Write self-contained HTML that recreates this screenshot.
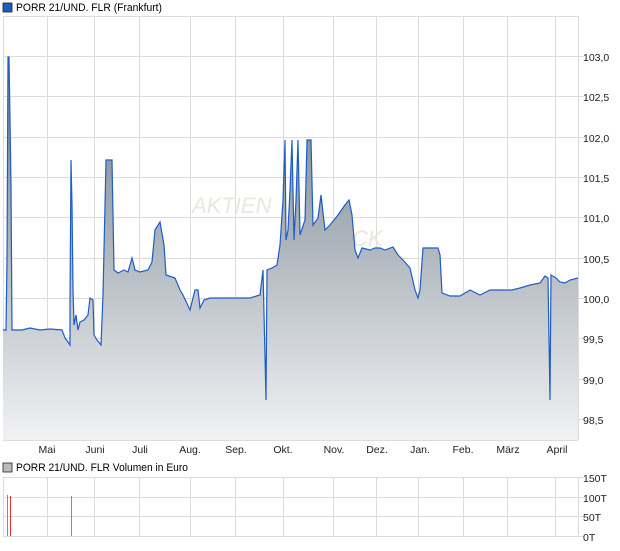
<!DOCTYPE html>
<html><head><meta charset="utf-8"><style>
body{margin:0;background:#fff;width:620px;height:546px;overflow:hidden;font-family:"Liberation Sans",sans-serif;}
</style></head><body>
<svg width="620" height="546" xmlns="http://www.w3.org/2000/svg" font-family="Liberation Sans, sans-serif" font-size="11">
<defs>
<linearGradient id="g" gradientUnits="userSpaceOnUse" x1="0" y1="57" x2="0" y2="440">
<stop offset="0" stop-color="#6f7e87"/><stop offset="0.45" stop-color="#a8b1b8"/><stop offset="1" stop-color="#f1f2f4"/>
</linearGradient>
</defs>
<rect x="3" y="3" width="9" height="9" fill="#1f5cc6" stroke="#222" stroke-width="0.8"/>
<text x="16" y="11" textLength="146" lengthAdjust="spacingAndGlyphs">PORR 21/UND. FLR (Frankfurt)</text>
<g stroke="#dcdcdc" stroke-width="1">
<line x1="3" y1="16.5" x2="578" y2="16.5"/>
<line x1="3" y1="56.5" x2="584" y2="56.5"/><line x1="3" y1="96.5" x2="584" y2="96.5"/><line x1="3" y1="137.5" x2="584" y2="137.5"/><line x1="3" y1="177.5" x2="584" y2="177.5"/><line x1="3" y1="217.5" x2="584" y2="217.5"/><line x1="3" y1="258.5" x2="584" y2="258.5"/><line x1="3" y1="298.5" x2="584" y2="298.5"/><line x1="3" y1="338.5" x2="584" y2="338.5"/><line x1="3" y1="379.5" x2="584" y2="379.5"/><line x1="3" y1="419.5" x2="584" y2="419.5"/>
<line x1="3" y1="440.5" x2="578" y2="440.5"/>
<line x1="3.5" y1="16" x2="3.5" y2="440"/><line x1="578.5" y1="16" x2="578.5" y2="440"/>
<line x1="47.5" y1="16" x2="47.5" y2="440"/><line x1="94.5" y1="16" x2="94.5" y2="440"/><line x1="139.5" y1="16" x2="139.5" y2="440"/><line x1="190.5" y1="16" x2="190.5" y2="440"/><line x1="235.5" y1="16" x2="235.5" y2="440"/><line x1="283.5" y1="16" x2="283.5" y2="440"/><line x1="333.5" y1="16" x2="333.5" y2="440"/><line x1="376.5" y1="16" x2="376.5" y2="440"/><line x1="418.5" y1="16" x2="418.5" y2="440"/><line x1="463.5" y1="16" x2="463.5" y2="440"/><line x1="507.5" y1="16" x2="507.5" y2="440"/><line x1="555.5" y1="16" x2="555.5" y2="440"/>
</g>
<g fill="#222" font-size="10.5">
<text x="583" y="61">103,0</text><text x="583" y="101">102,5</text><text x="583" y="142">102,0</text><text x="583" y="182">101,5</text><text x="583" y="222">101,0</text><text x="583" y="263">100,5</text><text x="583" y="303">100,0</text><text x="583" y="343">99,5</text><text x="583" y="384">99,0</text><text x="583" y="424">98,5</text>
</g>
<text x="192" y="213" font-size="22" fill="#ece6df" font-style="italic">AKTIEN</text>
<text x="352" y="246" font-size="22" fill="#ece6df" font-style="italic">CK</text>
<path d="M3,440 L3,330 L6,330 L7,260 L8,57 L9,57 L10,120 L11,185 L12,330 L22,330 L30,328 L40,330 L50,329 L62,330 L65,338 L68,342 L70,345 L70,300 L71,160 L72,205 L73,290 L74,325 L76,315 L78,330 L80,322 L84,320 L88,315 L90,298 L93,300 L94,335 L97,340 L101,345 L103,295 L106,160 L112,160 L114,270 L118,273 L124,270 L128,272 L132,258 L135,270 L140,272 L148,270 L152,262 L155,230 L160,222 L164,245 L166,275 L175,278 L180,290 L183,295 L190,310 L195,290 L198,290 L200,308 L204,300 L210,298 L250,298 L260,295 L263,270 L266,400 L267,270 L272,268 L277,265 L280,245 L283,200 L285,140 L286,240 L288,230 L290,190 L292,140 L294,240 L296,200 L298,140 L300,235 L305,220 L307,140 L311,140 L313,225 L318,218 L321,195 L325,230 L330,225 L338,215 L345,205 L349,200 L352,215 L355,250 L358,258 L362,248 L370,250 L375,248 L380,248 L385,250 L393,247 L398,255 L403,260 L410,268 L415,290 L418,298 L420,290 L423,248 L430,248 L438,248 L440,255 L442,293 L450,296 L460,296 L470,290 L480,295 L490,290 L500,290 L512,290 L520,288 L530,285 L540,283 L545,276 L548,278 L550,400 L551,275 L556,278 L560,282 L565,283 L570,280 L578,278 L578,440 Z" fill="url(#g)"/>
<path d="M3,330 L6,330 L7,260 L8,57 L9,57 L10,120 L11,185 L12,330 L22,330 L30,328 L40,330 L50,329 L62,330 L65,338 L68,342 L70,345 L70,300 L71,160 L72,205 L73,290 L74,325 L76,315 L78,330 L80,322 L84,320 L88,315 L90,298 L93,300 L94,335 L97,340 L101,345 L103,295 L106,160 L112,160 L114,270 L118,273 L124,270 L128,272 L132,258 L135,270 L140,272 L148,270 L152,262 L155,230 L160,222 L164,245 L166,275 L175,278 L180,290 L183,295 L190,310 L195,290 L198,290 L200,308 L204,300 L210,298 L250,298 L260,295 L263,270 L266,400 L267,270 L272,268 L277,265 L280,245 L283,200 L285,140 L286,240 L288,230 L290,190 L292,140 L294,240 L296,200 L298,140 L300,235 L305,220 L307,140 L311,140 L313,225 L318,218 L321,195 L325,230 L330,225 L338,215 L345,205 L349,200 L352,215 L355,250 L358,258 L362,248 L370,250 L375,248 L380,248 L385,250 L393,247 L398,255 L403,260 L410,268 L415,290 L418,298 L420,290 L423,248 L430,248 L438,248 L440,255 L442,293 L450,296 L460,296 L470,290 L480,295 L490,290 L500,290 L512,290 L520,288 L530,285 L540,283 L545,276 L548,278 L550,400 L551,275 L556,278 L560,282 L565,283 L570,280 L578,278" fill="none" stroke="#1f5cc6" stroke-width="1.2"/>
<g fill="#222" text-anchor="middle" font-size="10.5">
<text x="47" y="453">Mai</text><text x="95" y="453">Juni</text><text x="140" y="453">Juli</text><text x="190" y="453">Aug.</text><text x="236" y="453">Sep.</text><text x="283" y="453">Okt.</text><text x="334" y="453">Nov.</text><text x="377" y="453">Dez.</text><text x="420" y="453">Jan.</text><text x="463" y="453">Feb.</text><text x="508" y="453">März</text><text x="557" y="453">April</text>
</g>
<rect x="3" y="463" width="9" height="9" fill="#bbb" stroke="#222" stroke-width="0.8"/>
<text x="16" y="471" textLength="172" lengthAdjust="spacingAndGlyphs">PORR 21/UND. FLR Volumen in Euro</text>
<g stroke="#dcdcdc" stroke-width="1">
<line x1="3" y1="477.5" x2="584" y2="477.5"/><line x1="3" y1="497.5" x2="584" y2="497.5"/><line x1="3" y1="516.5" x2="584" y2="516.5"/><line x1="3" y1="536.5" x2="584" y2="536.5"/>
<line x1="3.5" y1="477" x2="3.5" y2="536"/><line x1="578.5" y1="477" x2="578.5" y2="536"/>
<line x1="47.5" y1="477" x2="47.5" y2="536"/><line x1="94.5" y1="477" x2="94.5" y2="536"/><line x1="139.5" y1="477" x2="139.5" y2="536"/><line x1="190.5" y1="477" x2="190.5" y2="536"/><line x1="235.5" y1="477" x2="235.5" y2="536"/><line x1="283.5" y1="477" x2="283.5" y2="536"/><line x1="333.5" y1="477" x2="333.5" y2="536"/><line x1="376.5" y1="477" x2="376.5" y2="536"/><line x1="418.5" y1="477" x2="418.5" y2="536"/><line x1="463.5" y1="477" x2="463.5" y2="536"/><line x1="507.5" y1="477" x2="507.5" y2="536"/><line x1="555.5" y1="477" x2="555.5" y2="536"/>
</g>
<line x1="7.5" y1="495" x2="7.5" y2="536" stroke="#3c3"/>
<line x1="10.5" y1="496" x2="10.5" y2="536" stroke="#d33"/>
<line x1="71.5" y1="496" x2="71.5" y2="536" stroke="#3c3"/>
<g fill="#222" font-size="10.5"><text x="583" y="482">150T</text><text x="583" y="502">100T</text><text x="583" y="521">50T</text><text x="583" y="541">0T</text></g>
</svg>
</body></html>
